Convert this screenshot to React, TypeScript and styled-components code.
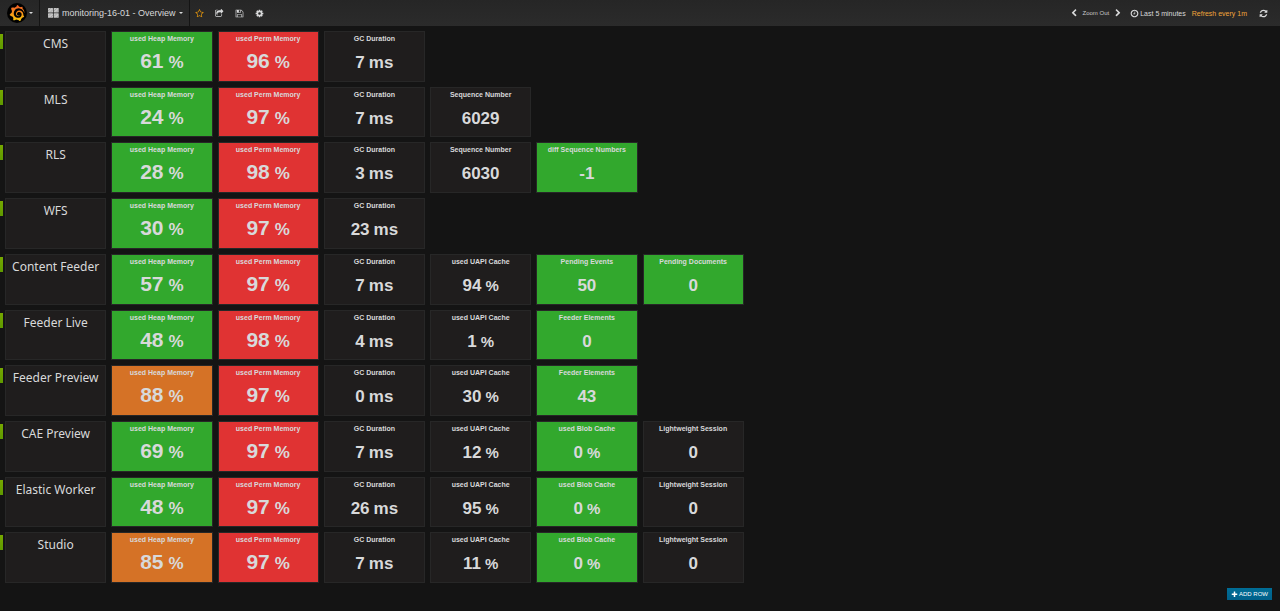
import React from "react";
import styled, { createGlobalStyle } from "styled-components";
import { SiGrafana } from "react-icons/si";

const Global = createGlobalStyle`
  * { box-sizing: border-box; }
  body {
    margin: 0;
    background: #141414;
    color: #d8d9da;
    font-family: "Liberation Sans", Arial, sans-serif;
    font-size: 9px;
  }
  button { font: inherit; color: inherit; background: none; border: 0; padding: 0; cursor: pointer; }
`;

const Page = styled.div`
  display: flex;
  flex-direction: column;
  min-height: 100vh;
`;

const Navbar = styled.header`
  display: flex;
  align-items: stretch;
  height: 26px;
  background: linear-gradient(180deg, #262626, #2b2b2b);
`;

const NavSection = styled.div`
  display: flex;
  align-items: center;
  border-right: 1px solid #141414;
`;

const LogoButton = styled.button`
  display: flex;
  align-items: center;
  gap: 2px;
  padding: 0 6px 0 7px;
`;

const LogoDisc = styled.span`
  display: flex;
  align-items: center;
  justify-content: center;
  width: 20px;
  height: 20px;
  border-radius: 50%;
  background: #000;
`;

const GradientDefs = styled.svg`
  position: absolute;
`;

const Caret = styled.span`
  border: 2px solid transparent;
  border-top-color: currentColor;
  border-bottom: 0;
`;

const DashboardButton = styled.button`
  display: flex;
  align-items: center;
  gap: 3px;
  padding: 0 6px 0 8px;
  font-size: 9px;
  line-height: 14px;
`;

const Actions = styled.div`
  display: flex;
  align-items: center;
  gap: 11px;
  padding-left: 5px;
`;

const IconButton = styled.button<{ $color?: string }>`
  display: flex;
  color: ${(p) => p.$color ?? "#d8d9da"};
`;

const TimeNav = styled.nav`
  display: flex;
  align-items: center;
  margin-left: auto;
  padding-right: 12px;
`;

const ZoomOut = styled.button`
  padding: 0 5px;
  font-size: 6px;
  color: #c8c8c8;
`;

const TimeButton = styled.button`
  display: flex;
  align-items: center;
  gap: 1px;
  margin-left: 8px;
  font-size: 7px;
`;

const RefreshText = styled.span`
  margin: 0 12px 0 6px;
  font-size: 7px;
  color: #f2a53a;
`;

const Rows = styled.main`
  display: grid;
  grid-auto-rows: 1fr;
  gap: 5px;
  flex: 1;
  padding-top: 5px;
`;

const Row = styled.section`
  display: grid;
  grid-template-columns: repeat(12, 1fr);
  gap: 5px;
  min-height: 50px;
  padding: 0 5px;
  background: linear-gradient(#76a800, #5f9a00) 0 3px / 3px 15px no-repeat;
`;

const tones = { plain: "#1f1d1d", green: "#32a82d", red: "#e03333", orange: "#d57226" };
type Tone = keyof typeof tones;

const Panel = styled.article<{ $tone: Tone }>`
  display: flex;
  flex-direction: column;
  align-items: center;
  min-width: 0;
  border: 1px solid rgba(41, 41, 41, 0.9);
  background: ${(p) => tones[p.$tone]};
  background-clip: padding-box;
  white-space: nowrap;
`;

const Name = styled.h2`
  margin: 3px 0 0;
  font: 400 12px/17px "Noto Sans", sans-serif;
`;

const PanelTitle = styled.h3`
  margin: 3px 0 0;
  font-size: 7px;
  line-height: 8px;
  font-weight: 700;
`;

const Value = styled.p<{ $large?: boolean }>`
  display: flex;
  align-items: baseline;
  gap: ${(p) => (p.$large ? "5px" : "4px")};
  margin: ${(p) => (p.$large ? "6px" : "8px")} 0 0;
  font-size: ${(p) => (p.$large ? "21px" : "17px")};
  line-height: 24px;
  font-weight: 700;
`;

const Unit = styled.span<{ $large?: boolean; $same?: boolean }>`
  font-size: ${(p) => (p.$large || p.$same ? "17px" : "15px")};
`;

const Footer = styled.footer`
  display: flex;
  justify-content: flex-end;
  padding: 5px 8px 11px;
`;

const AddRow = styled.button`
  display: flex;
  align-items: center;
  gap: 1px;
  height: 12px;
  padding: 0 4px;
  background: linear-gradient(#006d96, #00608a);
  color: #fff;
  font-size: 6px;
`;

const icons = {
  star: "M1201 1004l306-297-422-62-189-382-189 382-422 62 306 297-73 421 378-199 377 199zm527-357q0 22-26 48l-363 354 86 500q1 7 1 20 0 50-41 50-19 0-40-12l-449-236-449 236q-22 12-40 12-21 0-31.5-14.5t-10.5-35.5q0-6 2-20l86-500-364-354q-25-27-25-48 0-37 56-46l502-73 225-455q19-41 49-41t49 41l225 455 502 73q56 9 56 46z",
  share: "M1408 989v259q0 119-84.5 203.5t-203.5 84.5h-832q-119 0-203.5-84.5t-84.5-203.5v-832q0-119 84.5-203.5t203.5-84.5h255q13 0 22.5 9.5t9.5 22.5q0 27-26 32-77 26-133 60-10 4-16 4h-112q-66 0-113 47t-47 113v832q0 66 47 113t113 47h832q66 0 113-47t47-113v-214q0-19 18-29 28-13 54-37 16-16 35-8 21 9 21 29zm237-496l-384 384q-18 19-45 19-12 0-25-5-39-17-39-59v-192h-160q-323 0-438 131-119 137-74 473 3 23-20 34-8 2-12 2-16 0-26-13-10-14-21-31t-39.5-68.5-49.5-99.5-38.5-114-17.5-122q0-49 3.5-91t14-90 28-88 47-81.5 68.5-74 94.5-61.5 124.5-48.5 159.5-30.5 196.5-11h160v-192q0-42 39-59 13-5 25-5 26 0 45 19l384 384q19 19 19 45t-19 45z",
  save: "M512 1536h768v-384h-768v384zm896 0h128v-896q0-14-10-38.5t-20-34.5l-281-281q-10-10-34-20t-39-10v416q0 40-28 68t-68 28h-576q-40 0-68-28t-28-68v-416h-128v1280h128v-416q0-40 28-68t68-28h832q40 0 68 28t28 68v416zm-384-928v-320q0-13-9.5-22.5t-22.5-9.5h-192q-13 0-22.5 9.5t-9.5 22.5v320q0 13 9.5 22.5t22.5 9.5h192q13 0 22.5-9.5t9.5-22.5zm640 32v928q0 40-28 68t-68 28h-1344q-40 0-68-28t-28-68v-1344q0-40 28-68t68-28h928q40 0 88 20t76 48l280 280q28 28 48 76t20 88z",
  cog: "M1152 896q0-106-75-181t-181-75-181 75-75 181 75 181 181 75 181-75 75-181zm512-109v222q0 12-8 23t-20 13l-185 28q-19 54-39 91 35 50 107 138 10 12 10 25t-9 23q-27 37-99 108t-94 71q-12 0-26-9l-138-108q-44 23-91 38-16 136-29 186-7 28-36 28h-222q-14 0-24.5-8.5t-11.5-21.5l-28-184q-49-16-90-37l-141 107q-10 9-25 9-14 0-25-11-126-114-165-168-7-10-7-23 0-12 8-23 15-21 51-66.5t54-70.5q-27-50-41-99l-183-27q-13-2-21-12.5t-8-23.5v-222q0-12 8-23t19-13l186-28q14-46 39-92-40-57-107-138-10-12-10-24 0-10 9-23 26-36 98.5-107.5t94.5-71.5q13 0 26 10l138 107q44-23 91-38 16-136 29-186 7-28 36-28h222q14 0 24.5 8.5t11.5 21.5l28 184q49 16 90 37l142-107q9-9 24-9 13 0 25 10 129 119 165 170 7 8 7 22 0 12-8 23-15 21-51 66.5t-54 70.5q26 50 41 98l183 28q13 2 21 12.5t8 23.5z",
  refresh: "M1639 1056q0 5-1 7-64 268-268 434.5t-478 166.5q-146 0-282.5-55t-243.5-157l-129 129q-19 19-45 19t-45-19-19-45v-448q0-26 19-45t45-19h448q26 0 45 19t19 45-19 45l-137 137q71 66 161 102t187 36q134 0 250-65t186-179q11-17 53-117 8-23 30-23h192q13 0 22.5 9.5t9.5 22.5zm25-800v448q0 26-19 45t-45 19h-448q-26 0-45-19t-19-45 19-45l138-138q-148-137-349-137-134 0-250 65t-186 179q-11 17-53 117-8 23-30 23h-199q-13 0-22.5-9.5t-9.5-22.5v-7q65-268 270-434.5t480-166.5q146 0 284 55.5t245 156.5l130-129q19-19 45-19t45 19 19 45z",
  clock: "M1024 544v448q0 14-9 23t-23 9h-320q-14 0-23-9t-9-23v-64q0-14 9-23t23-9h224v-352q0-14 9-23t23-9h64q14 0 23 9t9 23zm416 352q0-148-73-273t-198-198-273-73-273 73-198 198-73 273 73 273 198 198 273 73 273-73 198-198 73-273zm224 0q0 209-103 385.5t-279.5 279.5-385.5 103-385.5-103-279.5-279.5-103-385.5 103-385.5 279.5-279.5 385.5-103 385.5 103 279.5 279.5 103 385.5z",
  left: "M1427 301l-531 531 531 531q19 19 19 45t-19 45l-166 166q-19 19-45 19t-45-19l-742-742q-19-19-19-45t19-45l742-742q19-19 45-19t45 19l166 166q19 19 19 45t-19 45z",
  right: "M1363 877l-742 742q-19 19-45 19t-45-19l-166-166q-19-19-19-45t19-45l531-531-531-531q-19-19-19-45t19-45l166-166q19-19 45-19t45 19l742 742q19 19 19 45t-19 45z",
  plus: "M1600 736v192q0 40-28 68t-68 28h-416v416q0 40-28 68t-68 28h-192q-40 0-68-28t-28-68v-416h-416q-40 0-68-28t-28-68v-192q0-40 28-68t68-28h416v-416q0-40 28-68t68-28h192q40 0 68 28t28 68v416h416q40 0 68 28t28 68z",
};

const Icon = ({ name, size = 9 }: { name: keyof typeof icons; size?: number }) => (
  <svg width={size} height={size} viewBox="0 0 1792 1792" fill="currentColor" aria-hidden="true">
    <path d={icons[name]} />
  </svg>
);

const GridIcon = () => (
  <svg width="11" height="10" viewBox="0 0 11 10" fill="#c4c4c4" aria-hidden="true">
    <rect width="5" height="4.500" rx=".5" />
    <rect x="5.700" width="5" height="4.500" rx=".5" />
    <rect y="5.300" width="5" height="4.500" rx=".5" />
    <rect x="5.700" y="5.300" width="5" height="4.500" rx=".5" />
    <path d="M0 3L3 0M2 4.500L5 1.500M6 3L9 0M8 4.500l3-3M0 8.500l3-3M2 10l3-3M6 8.500l3-3M8 10l3-3" stroke="#8d8d8d" strokeWidth=".5" />
  </svg>
);

type Stat = { title: string; value: string; unit?: string; tone: Tone; large?: boolean };
const heap = (value: string, tone: Tone = "green"): Stat => ({ title: "used Heap Memory", value, unit: "%", tone, large: true });
const perm = (value: string): Stat => ({ title: "used Perm Memory", value, unit: "%", tone: "red", large: true });
const gc = (value: string): Stat => ({ title: "GC Duration", value, unit: "ms", tone: "plain" });
const stat = (title: string, value: string, tone: Tone = "plain", unit?: string): Stat => ({ title, value, tone, unit });
const uapi = (value: string) => stat("used UAPI Cache", value, "plain", "%");
const blob = () => stat("used Blob Cache", "0", "green", "%");
const sessions = () => stat("Lightweight Session", "0");

const services: { name: string; stats: Stat[] }[] = [
  { name: "CMS", stats: [heap("61"), perm("96"), gc("7")] },
  { name: "MLS", stats: [heap("24"), perm("97"), gc("7"), stat("Sequence Number", "6029")] },
  { name: "RLS", stats: [heap("28"), perm("98"), gc("3"), stat("Sequence Number", "6030"), stat("diff Sequence Numbers", "-1", "green")] },
  { name: "WFS", stats: [heap("30"), perm("97"), gc("23")] },
  { name: "Content Feeder", stats: [heap("57"), perm("97"), gc("7"), uapi("94"), stat("Pending Events", "50", "green"), stat("Pending Documents", "0", "green")] },
  { name: "Feeder Live", stats: [heap("48"), perm("98"), gc("4"), uapi("1"), stat("Feeder Elements", "0", "green")] },
  { name: "Feeder Preview", stats: [heap("88", "orange"), perm("97"), gc("0"), uapi("30"), stat("Feeder Elements", "43", "green")] },
  { name: "CAE Preview", stats: [heap("69"), perm("97"), gc("7"), uapi("12"), blob(), sessions()] },
  { name: "Elastic Worker", stats: [heap("48"), perm("97"), gc("26"), uapi("95"), blob(), sessions()] },
  { name: "Studio", stats: [heap("85", "orange"), perm("97"), gc("7"), uapi("11"), blob(), sessions()] },
];

export default function App() {
  return (
    <Page>
      <Global />
      <Navbar>
        <NavSection>
          <LogoButton aria-label="Main menu">
            <LogoDisc>
              <GradientDefs width="0" height="0" aria-hidden="true">
                <linearGradient id="flame" x1="0" y1="0" x2="0" y2="1">
                  <stop offset="0" stopColor="#f05a28" />
                  <stop offset="1" stopColor="#fbca0a" />
                </linearGradient>
              </GradientDefs>
              <SiGrafana size={16} fill="url(#flame)" />
            </LogoDisc>
            <Caret />
          </LogoButton>
        </NavSection>
        <NavSection>
          <DashboardButton>
            <GridIcon />
            monitoring-16-01 - Overview
            <Caret />
          </DashboardButton>
        </NavSection>
        <Actions>
          <IconButton aria-label="Star" $color="#eb9a0c"><Icon name="star" /></IconButton>
          <IconButton aria-label="Share"><Icon name="share" /></IconButton>
          <IconButton aria-label="Save"><Icon name="save" /></IconButton>
          <IconButton aria-label="Settings"><Icon name="cog" /></IconButton>
        </Actions>
        <TimeNav>
          <IconButton aria-label="Earlier"><Icon name="left" size={8} /></IconButton>
          <ZoomOut>Zoom Out</ZoomOut>
          <IconButton aria-label="Later"><Icon name="right" size={8} /></IconButton>
          <TimeButton><Icon name="clock" />Last 5 minutes</TimeButton>
          <RefreshText>Refresh every 1m</RefreshText>
          <IconButton aria-label="Refresh"><Icon name="refresh" /></IconButton>
        </TimeNav>
      </Navbar>
      <Rows>
        {services.map((service) => (
          <Row key={service.name}>
            <Panel $tone="plain"><Name>{service.name}</Name></Panel>
            {service.stats.map((s) => (
              <Panel key={s.title} $tone={s.tone}>
                <PanelTitle>{s.title}</PanelTitle>
                <Value $large={s.large}>
                  {s.value}
                  {s.unit && <Unit $large={s.large} $same={s.unit === "ms"}>{s.unit}</Unit>}
                </Value>
              </Panel>
            ))}
          </Row>
        ))}
      </Rows>
      <Footer>
        <AddRow><Icon name="plus" size={7} />ADD ROW</AddRow>
      </Footer>
    </Page>
  );
}
